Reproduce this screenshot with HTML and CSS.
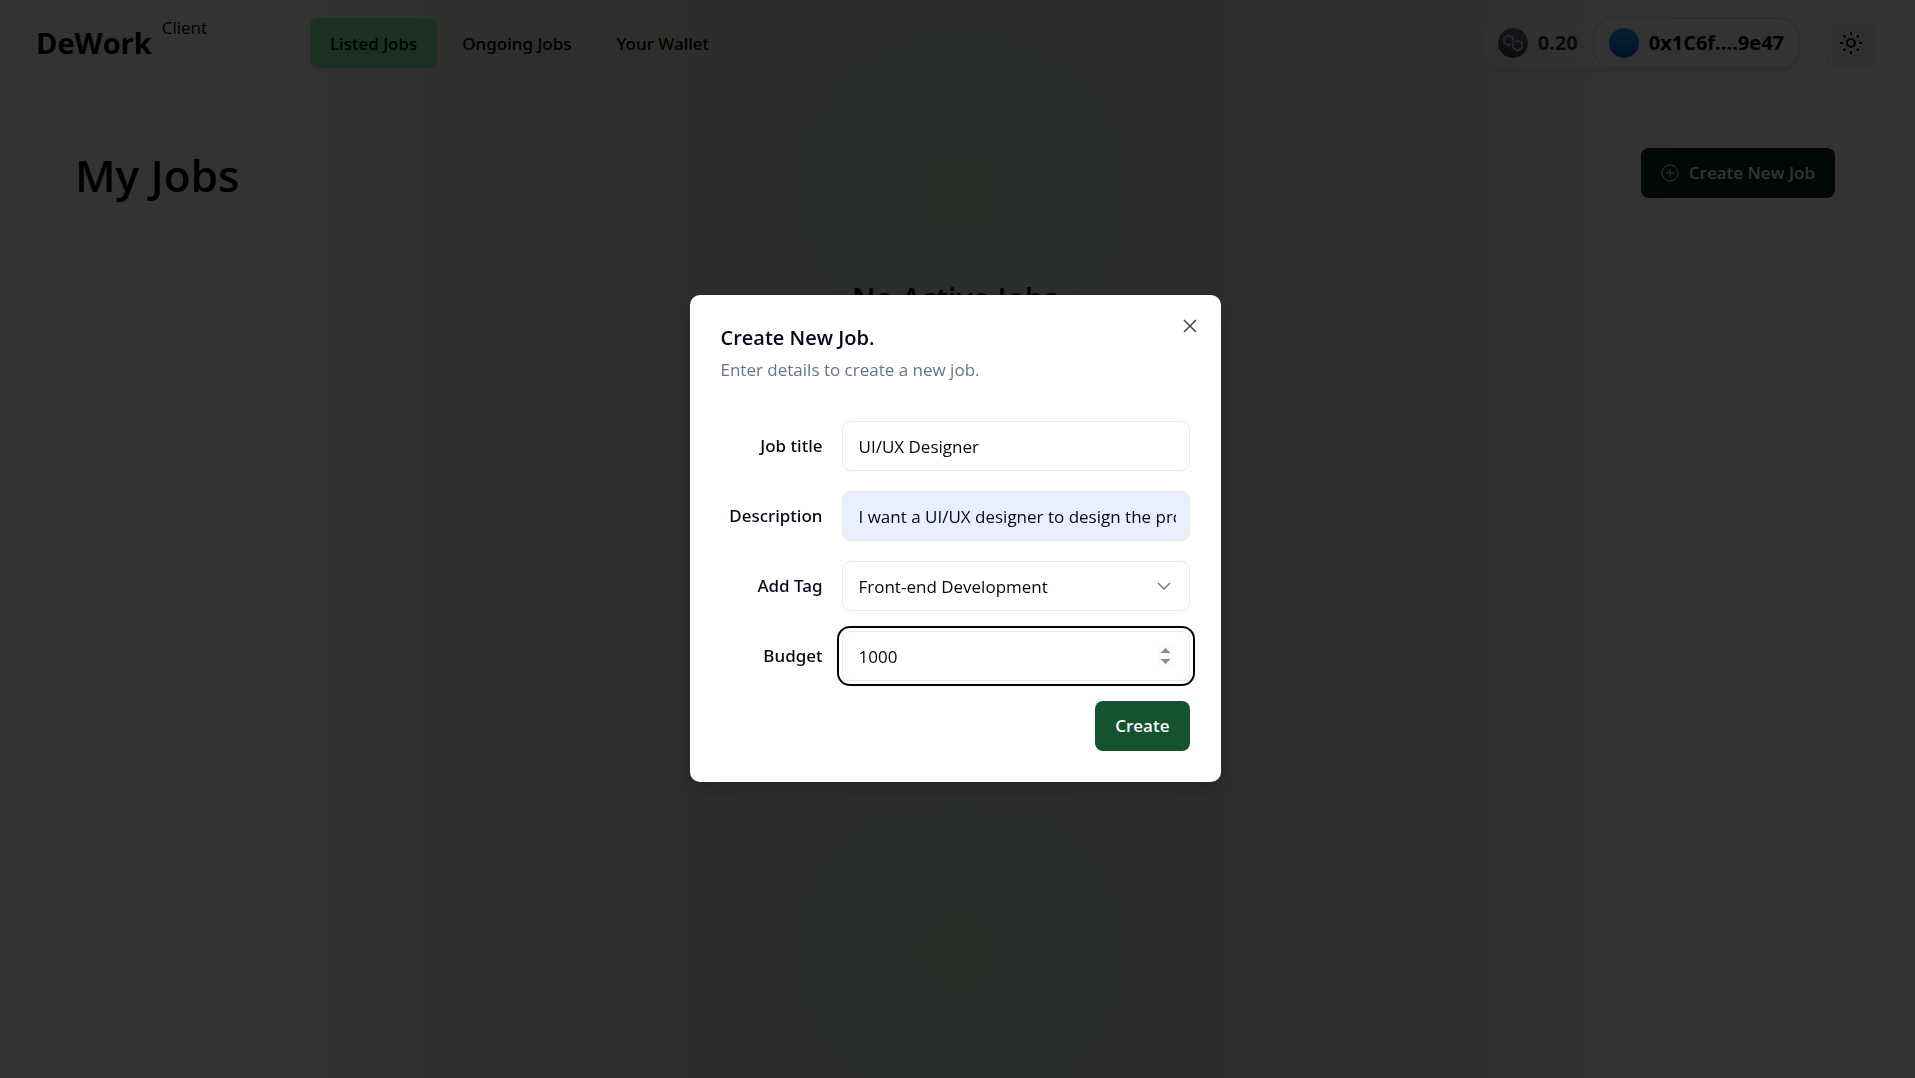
FILE: index.html
```html
<!DOCTYPE html>
<html lang="en">
<head>
<meta charset="utf-8">
<meta name="viewport" content="width=device-width, initial-scale=1">
<title>DeWork - My Jobs</title>
<link rel="stylesheet" href="styles.css">
</head>
<body>
<div class="page">
  <header class="header">
    <a class="brand" href="#"><span class="brand-name">DeWork</span><span class="brand-role">Client</span></a>
    <nav class="nav">
      <a class="nav-link active" href="#">Listed Jobs</a>
      <a class="nav-link" href="#">Ongoing Jobs</a>
      <a class="nav-link" href="#">Your Wallet</a>
    </nav>
    <div class="actions">
      <div class="wallet">
        <span class="balance">
          <svg class="coin" viewBox="0 0 30 30" aria-hidden="true">
            <defs><linearGradient id="coin-fill" x1="0" y1="0" x2="0" y2="1"><stop offset="0" stop-color="#77778c"/><stop offset="1" stop-color="#3b3b4a"/></linearGradient></defs>
            <circle cx="15" cy="15" r="15" fill="url(#coin-fill)"/>
            <path d="M13 16l-2.500 1.500-4.500-2.500v-5l4.500-2.500 4.500 2.500v10l4.500 2.500 4.500-2.500v-5l-4.500-2.500-2.500 1.500" fill="none" stroke="#d0d0da" stroke-width="1.600" stroke-linejoin="round"/>
          </svg>
          0.20
        </span>
        <button class="account" type="button"><span class="avatar"></span>0x1C6f....9e47</button>
      </div>
      <button class="theme" type="button" aria-label="Toggle theme">
        <svg width="24" height="24" viewBox="0 0 24 24" fill="none" stroke="currentColor" stroke-width="2" aria-hidden="true">
          <circle cx="12" cy="12" r="4"/>
          <path d="M12 1v3M12 20v3M1 12h3M20 12h3M4.300 4.300l2 2M17.700 17.700l2 2M4.300 19.700l2-2M17.700 6.300l2-2"/>
        </svg>
      </button>
    </div>
  </header>
  <main class="main">
    <div class="title-row">
      <h1 class="title">My Jobs</h1>
      <button class="btn" type="button">
        <svg width="18" height="18" viewBox="0 0 18 18" fill="none" stroke="currentColor" aria-hidden="true"><circle cx="9" cy="9" r="8"/><path d="M9 5v8M5 9h8"/></svg>
        Create New Job
      </button>
    </div>
    <p class="empty">No Active Jobs</p>
  </main>
</div>

<div class="overlay">
  <section class="dialog" role="dialog" aria-modal="true" aria-labelledby="dialog-title">
    <button class="close" type="button" aria-label="Close">
      <svg width="14" height="14" viewBox="0 0 14 14" stroke="currentColor" stroke-width="1.500" aria-hidden="true"><path d="M1 1l12 12M13 1L1 13"/></svg>
    </button>
    <h2 class="dialog-title" id="dialog-title">Create New Job.</h2>
    <p class="dialog-text">Enter details to create a new job.</p>
    <form class="form">
      <label class="label" for="title">Job title</label>
      <input class="field" id="title" type="text" value="UI/UX Designer">
      <label class="label" for="description">Description</label>
      <input class="field autofilled" id="description" type="text" value="I want a UI/UX designer to design the prototype">
      <label class="label" for="tag">Add Tag</label>
      <div class="select-wrap">
        <select class="field" id="tag"><option>Front-end Development</option></select>
        <svg class="chevron" width="14" height="9" viewBox="0 0 14 9" fill="none" stroke="currentColor" stroke-width="1.500" aria-hidden="true"><path d="M1 1l6 6 6-6"/></svg>
      </div>
      <label class="label" for="budget">Budget</label>
      <input class="field focused" id="budget" type="number" value="1000">
      <button class="btn submit" type="submit">Create</button>
    </form>
  </section>
</div>
</body>
</html>
```
FILE: styles.css
```css
* { box-sizing: border-box; }

body {
  margin: 0;
  font-family: "Open Sans", "Noto Sans", sans-serif;
  font-size: 17px;
  line-height: 24px;
  color: #020817;
}

button, input, select { font: inherit; color: inherit; }
button { cursor: pointer; }
a { color: inherit; text-decoration: none; }
h1, h2, p { margin: 0; }

.page {
  min-height: 100vh;
  color: #000;
  background:
    radial-gradient(circle at 50% 190px, rgba(120, 180, 110, .06), transparent 260px),
    radial-gradient(circle at 50% 950px, rgba(120, 180, 110, .06), transparent 260px),
    linear-gradient(90deg, transparent 10%, #f0f6ef 18%, #dfe9dc 28%, #d6e6d4 40%, #d6e6d4 60%, #dfe9dc 72%, #f0f6ef 82%, transparent 90%),
    #fff;
}

.header {
  display: flex;
  align-items: center;
  padding: 17px 39px 0 36px;
}

.brand { display: flex; width: 274px; gap: 10px; }
.brand-name { font-size: 29px; font-weight: 700; line-height: 52px; }
.brand-role { line-height: 22px; }

.nav { display: flex; gap: 5px; }
.nav-link {
  padding: 14px 20px 12px;
  border-radius: 8px;
  font-family: "Noto Sans", sans-serif;
  font-weight: 500;
}
.nav-link.active { background: #86efac; }

.actions { display: flex; align-items: center; gap: 26px; margin-left: auto; }

.wallet {
  display: flex;
  align-items: center;
  border-radius: 20px;
  background: rgba(255, 255, 255, .1);
  box-shadow: 0 2px 5px rgba(60, 70, 110, .16);
  font-size: 20px;
  font-weight: 700;
}
.balance { display: flex; align-items: center; gap: 10px; padding: 0 15px; color: #32323c; }
.coin { width: 30px; height: 30px; }
.account {
  display: flex;
  align-items: center;
  gap: 10px;
  height: 52px;
  padding: 0 14px;
  border: 2px solid #e6e6ec;
  border-radius: 20px;
  background: #fff;
}
.avatar {
  width: 30px;
  height: 30px;
  border-radius: 50%;
  background: linear-gradient(#2aa5f5, #0560e6);
}

.theme {
  display: grid;
  place-items: center;
  width: 50px;
  height: 50px;
  padding: 0;
  border: 1px solid #e2e8f0;
  border-radius: 8px;
  background: #f1f5f9;
}

.main { padding: 79px 80px 40px 75px; }
.title-row { display: flex; align-items: flex-start; justify-content: space-between; }
.title { font-size: 44px; font-weight: 600; line-height: 54px; }

.btn {
  display: flex;
  align-items: center;
  justify-content: center;
  gap: 10px;
  height: 50px;
  padding: 0 20px;
  border: 0;
  border-radius: 8px;
  background: #14532d;
  color: #f8fafc;
  font-weight: 600;
}
.title-row .btn { background: #052e16; }

.empty {
  padding-top: 77px;
  font-size: 30px;
  font-weight: 600;
  line-height: 40px;
  text-align: center;
}

.overlay {
  position: fixed;
  inset: 0;
  display: grid;
  place-items: center;
  padding: 0 5px 2px 0;
  background: rgba(0, 0, 0, .8);
}

.dialog {
  position: relative;
  width: 531px;
  max-width: 100%;
  padding: 31px;
  border-radius: 10px;
  background: #fff;
  box-shadow: 0 12px 20px rgba(0, 0, 0, .2);
}
.close {
  position: absolute;
  top: 20px;
  right: 20px;
  display: grid;
  padding: 4px;
  border: 0;
  background: none;
  color: #444;
}
.dialog-title { font-size: 20px; font-weight: 600; line-height: 24px; }
.dialog-text { padding-top: 8px; color: #64748b; }

.form {
  display: grid;
  grid-template-columns: 102px 1fr;
  gap: 20px 19px;
  align-items: center;
  padding-top: 39px;
}
.label {
  font-family: "Noto Sans", sans-serif;
  font-weight: 500;
  text-align: right;
}
.field {
  display: block;
  width: 100%;
  height: 50px;
  padding: 2px 13px 0 16px;
  border: 1px solid #e9ebee;
  border-radius: 8px;
  outline: 0;
  background: #fff;
}
.autofilled { background: #e8f0fe; }
.focused { padding-right: 16px; box-shadow: 0 0 0 3px #fff, 0 0 0 5px #020817; }
.field::-webkit-inner-spin-button { opacity: 1; height: 22px; }

.select-wrap { position: relative; }
.select-wrap .field { appearance: none; }
.chevron {
  position: absolute;
  top: 21px;
  right: 19px;
  color: #777;
  pointer-events: none;
}
.submit { grid-column: 2; justify-self: end; }
```
